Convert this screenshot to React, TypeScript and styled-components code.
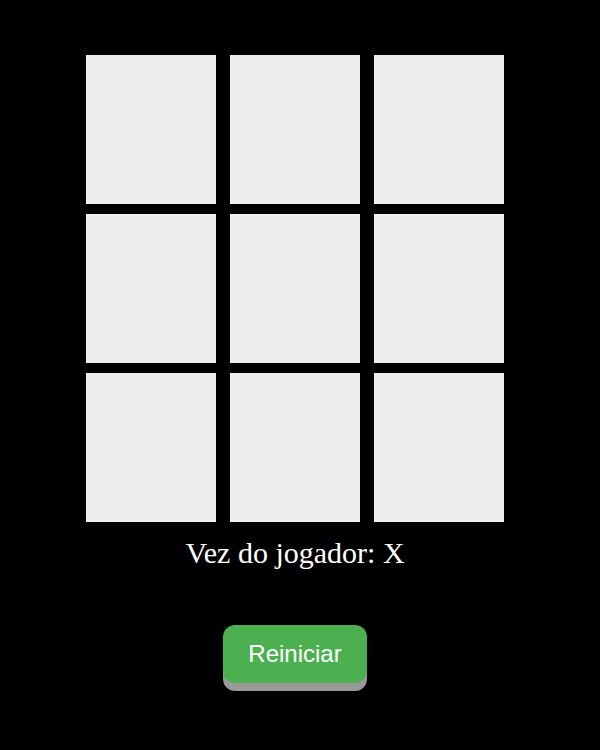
import React from "react";
import styled, { createGlobalStyle } from "styled-components";

const Global = createGlobalStyle`
  html, body {
    margin: 0;
    padding: 0;
    background: #000;
  }
  body {
    font-family: "Liberation Serif", "Times New Roman", serif;
  }
`;

const Page = styled.div`
  width: 590px;
  min-height: 750px;
  box-sizing: border-box;
  display: flex;
  flex-direction: column;
  align-items: center;
  padding: 55px 0 40px;
`;

const Board = styled.div`
  display: grid;
  grid-template-columns: repeat(3, 130px);
  grid-template-rows: repeat(3, 149px);
  column-gap: 14px;
  row-gap: 10px;
`;

const Cell = styled.div`
  background: #eeeeee;
`;

const Status = styled.p`
  margin: 14px 0 0;
  color: #fff;
  font-family: "Liberation Serif", "Times New Roman", serif;
  font-size: 30px;
`;

const ResetButton = styled.button`
  margin-top: 55px;
  padding: 15px 25px;
  font-family: "Liberation Sans", Arial, sans-serif;
  font-size: 24px;
  line-height: 28px;
  color: #fff;
  background: #4caf50;
  border: none;
  border-radius: 12px;
  box-shadow: 0 8px 0 0 #999999;
  cursor: pointer;
`;

export default function App() {
  const cells = Array.from({ length: 9 }, (_, i) => i);
  return (
    <>
      <Global />
      <Page>
        <Board>
          {cells.map((i) => (
            <Cell key={i} />
          ))}
        </Board>
        <Status>Vez do jogador: X</Status>
        <ResetButton>Reiniciar</ResetButton>
      </Page>
    </>
  );
}
